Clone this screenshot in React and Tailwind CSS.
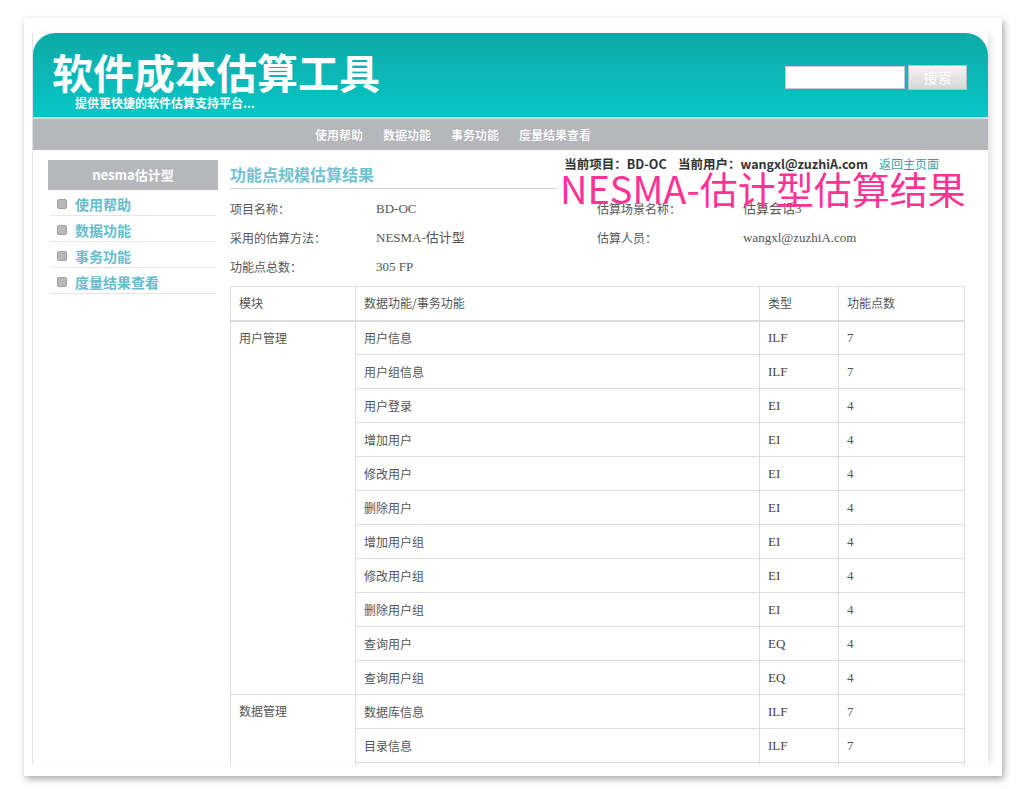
import React from "react";

const SANS = "font-['Noto_Sans_CJK_SC','Noto_Sans',sans-serif]";
const SERIF = "font-['Liberation_Serif','Noto_Sans_CJK_SC',serif]";

const navItems = ["使用帮助", "数据功能", "事务功能", "度量结果查看"];

const rows = [
  { module: "用户管理", span: 11, name: "用户信息", type: "ILF", fp: 7 },
  { name: "用户组信息", type: "ILF", fp: 7 },
  { name: "用户登录", type: "EI", fp: 4 },
  { name: "增加用户", type: "EI", fp: 4 },
  { name: "修改用户", type: "EI", fp: 4 },
  { name: "删除用户", type: "EI", fp: 4 },
  { name: "增加用户组", type: "EI", fp: 4 },
  { name: "修改用户组", type: "EI", fp: 4 },
  { name: "删除用户组", type: "EI", fp: 4 },
  { name: "查询用户", type: "EQ", fp: 4 },
  { name: "查询用户组", type: "EQ", fp: 4 },
  { module: "数据管理", span: 3, name: "数据库信息", type: "ILF", fp: 7 },
  { name: "目录信息", type: "ILF", fp: 7 },
  { name: "", type: "", fp: "" },
];

const App = () => {
  return (
    <div className={`w-[1022px] h-[789px] bg-white overflow-hidden pt-[18px] pl-[24px] ${SANS}`}>
      {/* paper frame */}
      <div className="w-[978px] h-[758px] bg-white shadow-[2px_3px_7px_rgba(0,0,0,0.35)] pt-[15px] pl-[8px] overflow-hidden">
        <div className="relative w-[956px] h-[732px] bg-white overflow-hidden border-l border-[#e2e2e2] shadow-[5px_0_6px_-2px_rgba(0,0,0,0.12)]">
          {/* Header */}
          <div className="h-[84px] rounded-t-[22px] bg-gradient-to-b from-[#0fa9a7] to-[#05c6c6] flex justify-between">
            <div>
              <div className="mt-[13px] ml-[19px] text-[41px] leading-[50px] font-bold text-white">
                软件成本估算工具
              </div>
              <div className="ml-[42px] text-[12px] leading-[14px] font-bold text-white">
                提供更快捷的软件估算支持平台...
              </div>
            </div>
            <div className="flex items-start mt-[32px] mr-[21px]">
              <input className="w-[120px] h-[23px] mt-[1px] bg-white border border-[#c8c8c8] outline-none" />
              <button className="w-[59px] h-[25px] ml-[3px] border border-[#bdbdbd] bg-gradient-to-b from-[#f4f4f4] to-[#d6d6d6] text-white text-[14px] leading-[23px]">
                搜索
              </button>
            </div>
          </div>
          <div className="h-[2px] bg-[#dcdcdc]" />
          {/* Nav */}
          <div className="h-[31px] bg-[#b6b7ba] flex pl-[282px] gap-[20px]">
            {navItems.map((n) => (
              <span key={n} className="text-[12px] leading-[31px] font-bold text-white [text-shadow:0_0_1px_rgba(80,80,120,0.4)]">
                {n}
              </span>
            ))}
          </div>

          {/* Body */}
          <div className="flex">
            {/* Sidebar */}
            <div className="ml-[15px] mt-[10px] w-[170px]">
              <div className="h-[30px] bg-[#b6b7ba] text-center text-[13px] leading-[30px] font-bold text-white">
                nesma估计型
              </div>
              {navItems.map((n) => (
                <div key={n} className="mx-[2px] h-[26px] border-b border-[#e6e6e6] flex items-center pl-[7px] pt-[3px]">
                  <span className="w-[10px] h-[10px] rounded-[2px] bg-[#b9b9b9] border border-[#a0a0a0]" />
                  <span className="ml-[8px] text-[14px] font-bold text-[#66bdcd]">{n}</span>
                </div>
              ))}
            </div>

            {/* Main */}
            <div className="ml-[12px] w-[734px]">
              <div className="flex h-[40px]">
                <div className="mt-[10px] w-[326px] h-[29px] border-b border-[#cfcfcf] text-[16px] leading-[29px] font-bold text-[#72c2d2]">
                  功能点规模估算结果
                </div>
                <div className="ml-auto mr-[25px] pt-[7px] text-[12.5px] leading-[14px]">
                  <span className="font-bold text-[#333]">当前项目：BD-OC&nbsp;&nbsp;&nbsp;&nbsp;当前用户：wangxl@zuzhiA.com</span>
                  <span className="ml-[11px] text-[12px] text-[#3a9ea6]">返回主页面</span>
                </div>
              </div>

              <div className="mt-[4px] text-[12px] text-[#555]">
                <div className="flex h-[29px] leading-[29px]">
                  <span className="w-[146px]">项目名称：</span>
                  <span className={`w-[221px] text-[13px] ${SERIF}`}>BD-OC</span>
                  <span className="w-[146px]">估算场景名称：</span>
                  <span className={`text-[13px] ${SERIF}`}>估算会话3</span>
                </div>
                <div className="flex h-[29px] leading-[29px]">
                  <span className="w-[146px]">采用的估算方法：</span>
                  <span className={`w-[221px] text-[13px] ${SERIF}`}>NESMA-估计型</span>
                  <span className="w-[146px]">估算人员：</span>
                  <span className={`text-[13px] ${SERIF}`}>wangxl@zuzhiA.com</span>
                </div>
                <div className="flex h-[29px] leading-[29px]">
                  <span className="w-[146px]">功能点总数：</span>
                  <span className={`text-[13px] ${SERIF}`}>305 FP</span>
                </div>
              </div>

              <table className="mt-[5px] w-[734px] border-collapse table-fixed text-[12px] text-[#555]">
                <colgroup>
                  <col className="w-[125px]" />
                  <col className="w-[404px]" />
                  <col className="w-[79px]" />
                  <col className="w-[126px]" />
                </colgroup>
                <thead>
                  <tr className="h-[34px]">
                    <th className="border border-b-2 border-[#dddddd] px-[8px] text-left font-normal">模块</th>
                    <th className="border border-b-2 border-[#dddddd] px-[8px] text-left font-normal">数据功能/事务功能</th>
                    <th className="border border-b-2 border-[#dddddd] px-[8px] text-left font-normal">类型</th>
                    <th className="border border-b-2 border-[#dddddd] px-[8px] text-left font-normal">功能点数</th>
                  </tr>
                </thead>
                <tbody>
                  {rows.map((r, i) => (
                    <tr key={i} className="h-[34px]">
                      {r.module && (
                        <td rowSpan={r.span} className="border border-[#dddddd] px-[8px] pt-[6px] align-top leading-[20px]">
                          {r.module}
                        </td>
                      )}
                      <td className="border border-[#dddddd] px-[8px]">{r.name}</td>
                      <td className={`border border-[#dddddd] px-[8px] text-[13px] text-[#444] ${SERIF}`}>{r.type}</td>
                      <td className={`border border-[#dddddd] px-[8px] text-[13px] text-[#4b5e4f] ${SERIF}`}>{r.fp}</td>
                    </tr>
                  ))}
                </tbody>
              </table>
            </div>
          </div>

          {/* annotation overlay */}
          <div className="absolute left-[527px] top-[134px] text-[38px] leading-[42px] text-[#ff3394] whitespace-nowrap">
            NESMA-估计型估算结果
          </div>
        </div>
      </div>
    </div>
  );
};

export default App;
